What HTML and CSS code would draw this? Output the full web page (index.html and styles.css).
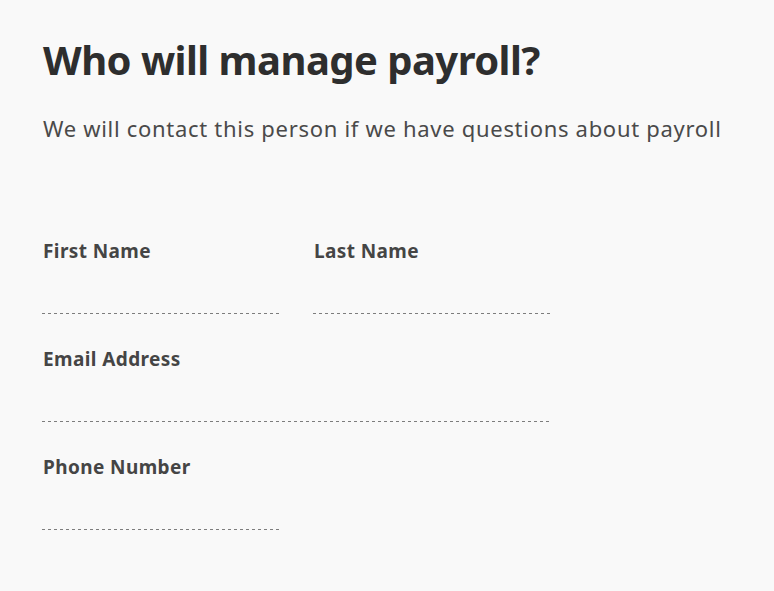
FILE: index.html
```html
<!DOCTYPE html>
<html lang="en">
<head>
<meta charset="utf-8">
<title>Who will manage payroll?</title>
<link rel="stylesheet" href="styles.css">
</head>
<body>
<main class="page">
  <h1 class="title">Who will manage payroll?</h1>
  <p class="subtitle">We will contact this person if we have questions about payroll</p>
  <form class="form">
    <div class="field">
      <label class="label" for="first">First Name</label>
      <input class="input" id="first" type="text">
    </div>
    <div class="field">
      <label class="label" for="last">Last Name</label>
      <input class="input" id="last" type="text">
    </div>
    <div class="field field-wide">
      <label class="label" for="email">Email Address</label>
      <input class="input" id="email" type="email">
    </div>
    <div class="field">
      <label class="label" for="phone">Phone Number</label>
      <input class="input" id="phone" type="tel">
    </div>
  </form>
</main>
</body>
</html>
```
FILE: styles.css
```css
html, body {
  margin: 0;
  padding: 0;
  background: #f9f9f9;
}
body {
  font-family: "Noto Sans", "Open Sans", sans-serif;
  color: #444;
}
.page {
  padding: 36px 0 0 43px;
}
.title {
  margin: 0;
  font-size: 40px;
  line-height: 48px;
  font-weight: 700;
  letter-spacing: -0.55px;
  color: #2e2e2e;
}
.subtitle {
  margin: 29px 0 0;
  font-size: 22px;
  line-height: 30px;
  font-weight: 400;
  letter-spacing: 0.7px;
  color: #4a4a4a;
}
.form {
  margin-top: 96px;
  display: grid;
  grid-template-columns: 238px 238px;
  column-gap: 33px;
  row-gap: 33px;
}
.field {
  display: flex;
  flex-direction: column;
}
.field-wide {
  grid-column: 1 / span 2;
}
.label {
  font-size: 19px;
  line-height: 24px;
  font-weight: 700;
  letter-spacing: 0.4px;
  color: #454545;
}
.input {
  box-sizing: border-box;
  height: 51px;
  margin: 0 0 0 -1px;
  padding: 0;
  border: 0;
  background: repeating-linear-gradient(to right, #7d7d7d 0 3px, transparent 3px 6px) left bottom / 100% 1px no-repeat;
  font: inherit;
  outline: none;
}
```
